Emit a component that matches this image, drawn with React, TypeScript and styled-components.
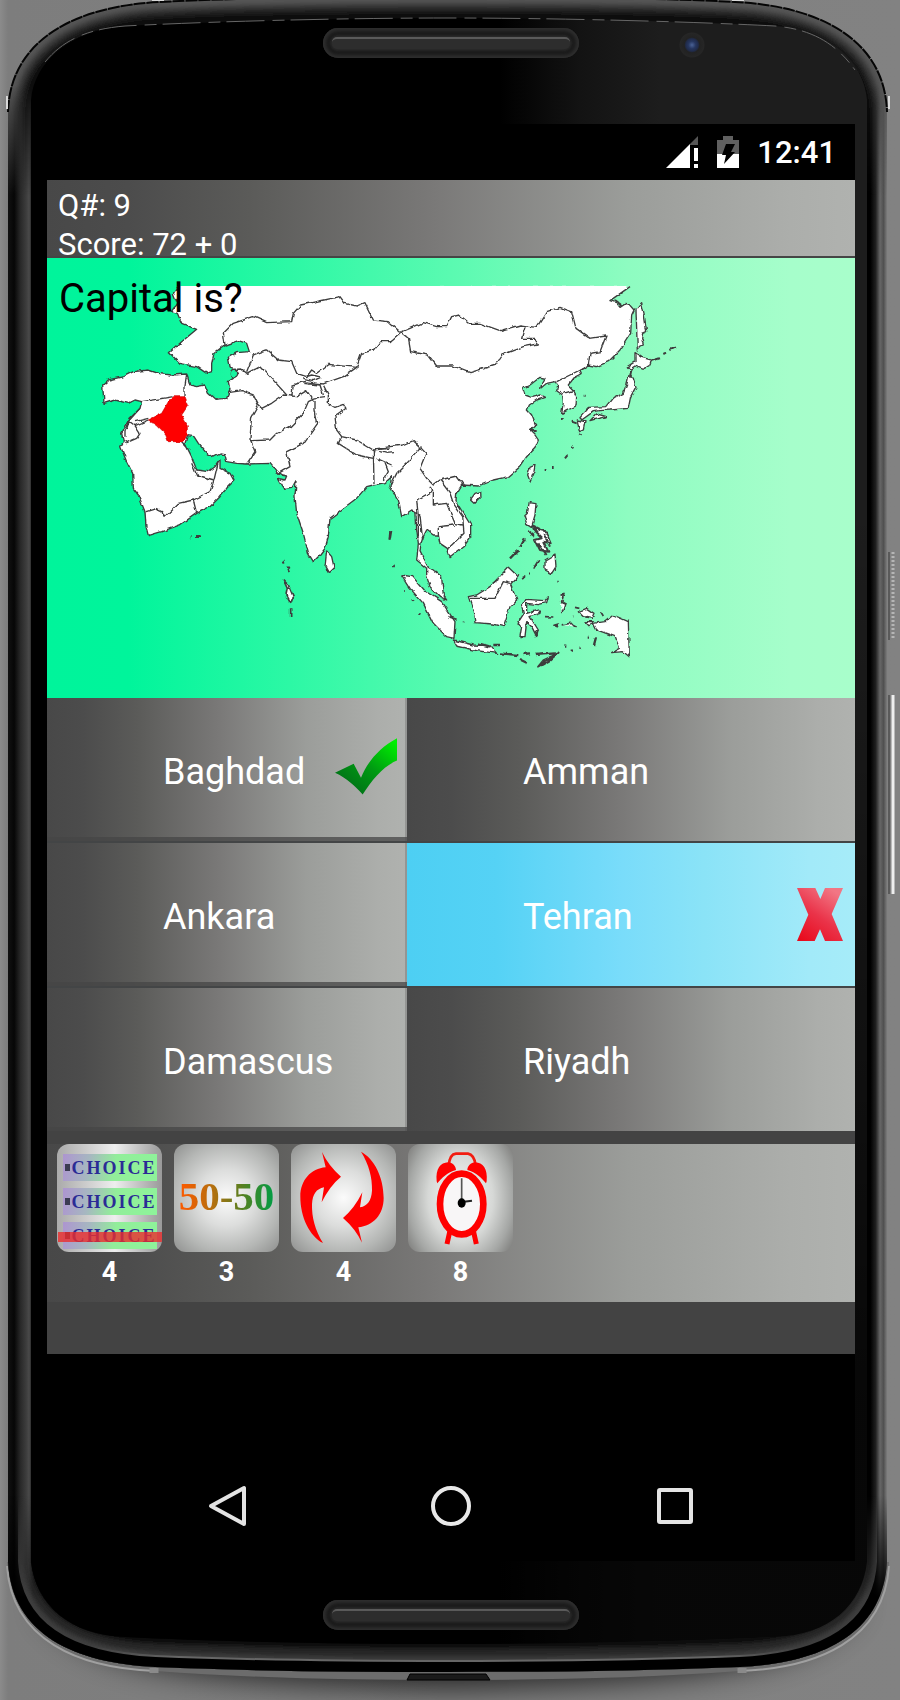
import React from "react";
import styled, { createGlobalStyle, css } from "styled-components";

const GlobalStyle = createGlobalStyle`
  * { box-sizing: border-box; }
  html, body { margin: 0; padding: 0; }
  body {
    background: #808080;
    font-family: Roboto, "Liberation Sans", sans-serif;
    color: #fff;
  }
  button { font: inherit; color: inherit; border: 0; padding: 0; background: none; cursor: pointer; }
  p, h1 { margin: 0; font-weight: 400; }
  svg { display: block; }
`;

const steel =
  "linear-gradient(90deg, #484848 0%, #4c4c4c 10%, #5b5b59 25%, #7a7978 48%, #9b9d9a 72%, #acaeab 92%, #b0b2af 100%)";
const mint =
  "linear-gradient(90deg, #00f49b 0%, #00f59b 10%, #2cf8a5 30%, #5afab1 50%, #8efcc1 72%, #a6fecb 92%, #a8fecb 100%)";
const sky =
  "linear-gradient(90deg, #4dcff3 0%, #55d2f5 20%, #79dcfa 48%, #8ae3f7 66%, #a2eaf9 90%, #a6ecf9 100%)";

const Device = styled.div`
  position: relative;
  min-height: 100vh;
  display: flex;
  flex-direction: column;
  padding: 0 5% 0 47px;
  overflow: hidden;
`;

const ShellDrawing = styled.svg`
  position: absolute;
  inset: 0;
  width: 100%;
  height: 100%;
`;

const Bezel = styled.div<{ $height: number; $top: number }>`
  position: relative;
  min-height: ${(p) => p.$height}px;
  padding-top: ${(p) => p.$top}px;
  display: grid;
  grid-template-columns: 1fr 256px 1fr;
  align-items: start;
`;

const Speaker = styled.div`
  grid-column: 2;
  height: 30px;
  border-radius: 15px;
  padding: 9px;
  background: #2b2b2b;
  box-shadow: inset 0 0 4px 3px #303030, inset 0 0 3px 7px #171717;
`;

const SpeakerSlot = styled.div`
  height: 12px;
  border-radius: 5px;
  border-top: 2px solid #5a5a5a;
  background: #2d2d2d;
`;

const Camera = styled.div`
  width: 26px;
  height: 26px;
  margin: 4px 0 0 100px;
  border-radius: 50%;
  background: radial-gradient(circle at 50% 50%, #4a6296 0, #26365f 20%, #202b4a 34%, #222 42%, #262626 65%, #1c1c1c 72%);
`;

const Screen = styled.main`
  position: relative;
  background: #000;
`;

const StatusBar = styled.div`
  height: 56px;
  padding: 0 19px 0 0;
  display: flex;
  justify-content: flex-end;
  align-items: center;
  gap: 18px;
`;

const Clock = styled.time`
  font-size: 31px;
  line-height: 36px;
  font-weight: 500;
  padding-top: 2px;
`;

const ScoreHeader = styled.header`
  min-height: 78px;
  padding: 6px 11px 0;
  border-bottom: 2px solid #454545;
  background: ${steel};
  font-size: 31px;
  line-height: 39px;
  p { height: 39px; }
  p + p { height: 31px; }
`;

const QuestionPanel = styled.section`
  position: relative;
  min-height: 440px;
  background: ${mint};
`;

const Question = styled.h1`
  position: absolute;
  top: 17px;
  left: 12px;
  color: #000;
  font-size: 40px;
  line-height: 48px;
`;

const AsiaMap = styled.svg`
  width: 100%;
  height: 440px;
`;

const AnswerGrid = styled.section`
  display: grid;
  grid-template-columns: 45fr 56fr;
  grid-auto-rows: minmax(143px, auto);
  row-gap: 2px;
  background: #434546;
`;

const Answer = styled.button<{ $picked?: boolean }>`
  display: flex;
  align-items: center;
  justify-content: space-between;
  padding: 0 12px 0 116px;
  font-size: 36px;
  line-height: 44px;
  text-align: left;
  background: ${(p) => (p.$picked ? sky : steel)};
  &:nth-child(odd) { padding-right: 10px; }
  ${(p) =>
    !p.$picked &&
    css`
      &:nth-child(odd) {
        box-shadow: inset 0 -4px rgba(70, 70, 70, 0.75), inset -2px 0 rgba(120, 120, 120, 0.5);
      }
    `}
`;

const City = styled.span`
  padding-top: 5px;
`;

const Separator = styled.div`
  height: 13px;
  background: #434343;
`;

const Lifelines = styled.section`
  display: flex;
  gap: 12px;
  min-height: 158px;
  padding: 0 10px 14px;
  background: ${steel};
`;

const Lifeline = styled.button`
  width: 105px;
  display: flex;
  flex-direction: column;
  align-items: center;
  gap: 4px;
`;

const Tile = styled.span<{ $fade?: boolean; $striped?: boolean }>`
  position: relative;
  width: 105px;
  height: 108px;
  border-radius: 12px;
  overflow: hidden;
  display: flex;
  flex-direction: column;
  align-items: center;
  justify-content: center;
  background: radial-gradient(circle, #fbfbfb 0%, #dcdddc 38%, #b4b6b4 72%, #8e8f8e 100%);
  ${(p) =>
    p.$fade &&
    css`
      background: radial-gradient(ellipse 62% 80% at 50% 50%, #fbfbfb 0%, #d6d8d6 50%, #a5a7a5 80%, #7d7d7b 100%);
    `}
  ${(p) =>
    p.$striped &&
    css`
      justify-content: flex-start;
      gap: 7px;
      padding-top: 10px;
      background: linear-gradient(90deg, #aaa 0%, #eee 55%, #999 100%);
    `}
`;

const Choice = styled.span`
  width: 94px;
  height: 27px;
  display: flex;
  align-items: center;
  justify-content: space-between;
  background: linear-gradient(100deg, #ad95d0 0%, #a6b8c0 28%, #92ee9a 55%, #8ef39a 100%);
  color: #2b2b96;
  font-family: "Liberation Serif", serif;
  font-weight: 700;
  font-size: 18px;
  line-height: 28px;
  letter-spacing: 2px;
  &::before {
    content: "";
    width: 5px;
    height: 7px;
    margin-left: 2px;
    background: #3b3b52;
  }
`;

const Strike = styled.span`
  position: absolute;
  left: 1px;
  right: 0;
  top: 88px;
  height: 10px;
  background: rgba(235, 45, 45, 0.8);
`;

const Fifty = styled.span`
  padding-bottom: 4px;
  font-family: "Liberation Serif", serif;
  font-weight: 700;
  font-size: 41px;
  line-height: 48px;
  color: transparent;
  background: linear-gradient(90deg, #f75c00 5%, #b3700f 36%, #587f20 66%, #059b42 98%);
  background-clip: text;
  -webkit-background-clip: text;
`;

const Count = styled.span`
  font-size: 27px;
  line-height: 32px;
  font-weight: 700;
`;

const AppFooter = styled.div`
  height: 52px;
  background: #434343;
`;

const NavBar = styled.nav`
  padding: 120px 0 23px;
  display: flex;
  justify-content: center;
  gap: 160px;
`;

const NavButton = styled.button`
  width: 64px;
  height: 64px;
  display: grid;
  place-items: center;
`;

const topArc = "M8 112 C10 40 75 6 160 2 C230 -2 350 -3 448 -3 C546 -3 665 -2 735 2 C820 6 885 40 887 112";
const topEdge = "M8 220 V112 C10 40 75 6 160 2 C230 -2 350 -3 448 -3 C546 -3 665 -2 735 2 C820 6 885 40 887 112 V220";
const bottomEdge =
  "M8 1440 V1562 C12 1635 75 1663 155 1667 C250 1671 350 1672 448 1672 C546 1672 645 1671 740 1667 C820 1663 883 1635 887 1562 V1440";
const bodyOutline = `${topArc} V1562 C883 1635 820 1663 740 1667 C645 1671 546 1672 448 1672 C350 1672 250 1671 155 1667 C75 1663 12 1635 8 1562 Z`;
const glassOutline =
  "M31 100 C34 62 70 30 125 26 C220 21 350 18 448 18 C546 18 680 21 775 26 C830 30 864 62 867 100 V1562 C862 1605 830 1635 775 1637 C680 1642 546 1644 448 1644 C350 1644 220 1642 125 1637 C70 1635 36 1605 31 1562 Z";

const Shell = () => (
  <ShellDrawing viewBox="0 0 900 1700" preserveAspectRatio="none" aria-hidden="true">
    <defs>
      <linearGradient id="sides" gradientUnits="userSpaceOnUse" x1="8" x2="888" y1="0" y2="0">
        <stop offset="0" stopColor="#111" />
        <stop offset="0.007" stopColor="#060606" />
        <stop offset="0.014" stopColor="#282828" />
        <stop offset="0.021" stopColor="#3e3e3e" />
        <stop offset="0.024" stopColor="#4a4a4a" />
        <stop offset="0.027" stopColor="#222" />
        <stop offset="0.03" stopColor="#000" />
        <stop offset="0.98" stopColor="#000" />
        <stop offset="0.986" stopColor="#202020" />
        <stop offset="0.991" stopColor="#666" />
        <stop offset="0.995" stopColor="#505050" />
        <stop offset="1" stopColor="#8a8a8a" />
      </linearGradient>
      <linearGradient id="glass" gradientUnits="userSpaceOnUse" x1="500" x2="660" y1="0" y2="0">
        <stop offset="0" stopColor="#000" />
        <stop offset="0.5" stopColor="#131313" />
        <stop offset="1" stopColor="#1d1d1d" />
      </linearGradient>
      <linearGradient id="glassFade" x1="0" x2="0" y1="0" y2="1">
        <stop offset="0.3" stopColor="#000" stopOpacity="0" />
        <stop offset="0.85" stopColor="#000" stopOpacity="0.75" />
      </linearGradient>
      <linearGradient id="backdrop" x1="0" x2="1" y1="0" y2="0">
        <stop offset="0" stopColor="#8b8b8b" />
        <stop offset="0.009" stopColor="#7d7d7d" />
        <stop offset="0.5" stopColor="#808080" />
        <stop offset="1" stopColor="#828282" />
      </linearGradient>
      <linearGradient id="rimLine" gradientUnits="userSpaceOnUse" x1="90" x2="800" y1="0" y2="0">
        <stop offset="0" stopColor="#666" stopOpacity="0" />
        <stop offset="0.12" stopColor="#666" />
        <stop offset="0.88" stopColor="#666" />
        <stop offset="1" stopColor="#666" stopOpacity="0" />
      </linearGradient>
      <linearGradient id="endsFade" gradientUnits="userSpaceOnUse" x1="0" x2="0" y1="0" y2="1700">
        <stop offset="0.05" stopColor="#fff" />
        <stop offset="0.115" stopColor="#000" />
        <stop offset="0.88" stopColor="#000" />
        <stop offset="0.94" stopColor="#fff" />
      </linearGradient>
      <mask id="endsMask" maskUnits="userSpaceOnUse" x="0" y="0" width="900" height="1700">
        <rect width="900" height="1700" fill="url(#endsFade)" />
      </mask>
      <clipPath id="bodyClip"><path d={bodyOutline} /></clipPath>
      <filter id="soft" x="-10%" y="-50%" width="120%" height="200%">
        <feGaussianBlur stdDeviation="16" />
      </filter>
      <filter id="bevel" filterUnits="userSpaceOnUse" x="0" y="-20" width="900" height="1720">
        <feGaussianBlur stdDeviation="2" />
      </filter>
    </defs>
    <rect width="900" height="1700" fill="url(#backdrop)" />
    <path d="M40 1600 C80 1660 150 1680 448 1688 C746 1680 816 1660 860 1600 Z" fill="#000" filter="url(#soft)" opacity="0.75" />
    <path d="M7 1562 C12 1640 78 1668 155 1671 C250 1678 350 1680 448 1680 C546 1680 645 1678 740 1671 C818 1668 884 1640 889 1562 Z" fill="#6c6c6c" />
    <path d="M7 1566 C12 1640 78 1668 155 1671 M889 1566 C884 1640 818 1668 740 1671" fill="none" stroke="#a0a0a0" strokeWidth="2" />
    <path d="M407 1680 L410 1674 H486 L490 1680 Z" fill="#1a1a1a" stroke="#000" strokeWidth="1" />
    <path d="M154 1668 V1673 M742 1668 V1673" stroke="#8a8a8a" strokeWidth="9" />
    <path d={bodyOutline} fill="url(#sides)" />
    <g mask="url(#endsMask)">
      <g clipPath="url(#bodyClip)" fill="none">
        <g filter="url(#bevel)">
          <path d={topEdge} stroke="#0a0a0a" strokeWidth="50" />
          <path d={topEdge} stroke="#1f1f1f" strokeWidth="32" />
          <path d={topEdge} stroke="#383838" strokeWidth="22" />
          <path d={topEdge} stroke="#555" strokeWidth="12" />
          <path d={bottomEdge} stroke="#0c0c0c" strokeWidth="70" />
          <path d={bottomEdge} stroke="#272727" strokeWidth="46" />
          <path d={bottomEdge} stroke="#3e3e3e" strokeWidth="30" />
        </g>
        <path d={bottomEdge} stroke="url(#rimLine)" strokeWidth="24" />
        <path d={bottomEdge} stroke="#000" strokeWidth="20" />
      </g>
    </g>
    <path d={topArc} fill="none" stroke="#050505" strokeWidth="2" strokeDasharray="12 1" />
    <path d="M7 96 V109 M889 96 V109 M152 0 H164 M732 0 H744" stroke="#d8d8d8" strokeWidth="2" />
    <path d={glassOutline} fill="url(#glass)" />
    <path d={glassOutline} fill="url(#glassFade)" />
    <path
      d="M45 62 C65 38 90 29 125 26 C220 21 350 18 448 18 C546 18 680 21 775 26 C810 29 835 42 855 70"
      fill="none"
      stroke="#666"
      strokeWidth="1"
      strokeDasharray="38 8 12 6"
    />
    <path d="M893 552 V640" stroke="#b5b5b5" strokeWidth="3" strokeDasharray="2 2" />
    <path d="M889 552 V640 M889 695 V894" stroke="#5a5a5a" strokeWidth="2" />
    <path d="M893 695 V894" stroke="#eee" strokeWidth="3" />
  </ShellDrawing>
);

/* Land drawn at three units per pixel. */
const Asia = () => (
  <AsiaMap viewBox="0 0 808 440" preserveAspectRatio="xMinYMin meet" role="img" aria-label="Map of Asia">
    <defs>
      <filter id="coast" x="-5%" y="-5%" width="110%" height="110%">
        <feTurbulence type="fractalNoise" baseFrequency="0.14" numOctaves="2" seed="4" />
        <feDisplacementMap in="SourceGraphic" scale="4" xChannelSelector="R" yChannelSelector="G" />
      </filter>
    </defs>
    <path d="M130 28 H580 L562 42 V50 H132 Z" fill="#fff" />
    <g filter="url(#coast)">
      <g transform="translate(43 12) scale(0.33333)" fill="#fff" stroke="#3c3c3c" strokeWidth="4" strokeLinejoin="round">
        <path
          d="M1620 50 L1560 92 1578 98 1590 112 1608 100 1618 104 1632 120 1625 135 1622 190 1590 240 1555 275 1520 290 1495 285 1470 300 1475 312 1450 325 1435 345 1450 360 1460 380 1458 408 1430 422 1415 430 1420 400 1418 375 1400 362 1403 345 1395 335 1370 340 1352 355 1355 342 1365 325 1350 322 1320 345 1298 355 1305 375 1325 382 1350 375 1364 382 1340 390 1318 405 1312 420 1325 435 1337 465 1320 480 1335 495 1345 510 1335 535 1310 560 1290 590 1255 620 1210 630 1165 648 1115 645 1100 670 1098 695 1120 730 1142 765 1142 800 1125 825 1080 860 1072 835 1050 820 1045 795 1030 795 1010 780 1000 800 993 820 990 845 1000 865 1015 892 1030 900 1055 920 1060 975 1070 990 1050 980 1020 950 1010 920 1010 895 980 870 985 820 980 780 978 730 965 720 935 740 925 690 900 650 905 620 885 638 850 645 830 650 800 685 760 715 720 745 715 800 705 835 690 855 670 875 655 850 640 790 620 730 615 680 618 632 605 655 585 658 570 635 565 625 585 630 590 618 575 615 560 605 540 580 470 582 440 580 410 575 405 555 390 552 370 562 350 550 325 520 312 500 292 497 285 520 305 560 320 600 355 605 375 590 390 570 390 595 420 610 432 632 410 655 390 680 360 710 320 730 270 765 215 785 175 797 168 770 165 725 145 675 130 655 128 610 110 575 92 530 100 515 95 490 110 460 150 415 155 395 135 390 115 400 75 390 42 400 38 345 55 330 100 320 130 305 175 300 205 310 245 315 290 312 300 345 320 350 345 345 355 370 375 388 410 385 420 360 415 335 430 325 445 310 430 300 420 290 415 262 440 248 478 245 470 220 445 212 400 228 372 250 365 280 365 305 350 310 320 290 270 280 238 248 275 215 320 178 275 160 262 130 245 125 262 100 250 70 262 52"
        />
        <g fill="none">
          <path d="M290 312 285 345 285 380 M155 395 200 388 250 380 M175 450 135 467 120 455 112 480 M175 445 135 455 M135 467 150 490 140 505 110 518 100 512 M150 415 120 445 105 485 105 500" />
          <path d="M168 725 200 715 215 722 222 742 265 700 310 690 360 665 372 630 320 615 305 580 M310 690 320 730 M372 630 385 575 M275 515 290 530" />
          <path d="M415 368 455 362 490 375 505 405 485 440 480 505 495 545 470 582 M480 512 540 510 560 490 600 470 640 430 655 395 675 385 M505 405 515 415 545 400 580 375 620 380 650 362 665 385 705 380" />
          <path d="M430 298 455 297 470 310 510 288 545 325 590 375 M470 305 490 255 530 240 565 270 605 275 620 310 650 320 665 300 680 310 715 283 750 287 800 292 760 320 700 342 640 335 610 345 605 380 M650 320 665 315 692 322 670 332 640 325 M640 340 690 345 700 375" />
          <path d="M800 292 815 250 850 240 870 215 900 215 932 187 M405 225 400 190 430 160 490 140 530 158 605 155 610 130 632 105 750 80 765 100 800 108 825 98 850 150 895 155 932 187" />
          <path d="M932 187 1000 158 1040 170 1070 170 1085 140 1105 135 1135 160 1170 160 1230 182 1290 165 1340 172 1370 125 1410 112 1445 125 1458 175 1500 205 1548 198 1530 245 1500 250 1495 285 M1305 172 1295 205 1335 205 1342 222 1300 230 1235 255 1215 285 1140 308 1090 288 1040 288 1015 255 962 245 955 205 932 187" />
          <path d="M1490 290 1440 315 1400 335 M1420 370 1455 360 M675 390 675 420 683 460 640 520 590 545 600 590 565 610 M700 345 715 375 715 400 735 412 760 403 768 415 735 440 740 480 755 500 800 510 850 540 900 535 M755 500 745 520 800 555 850 565 855 540 M850 540 852 640 M860 565 905 585 M870 545 890 550 912 548 M885 580 895 605 880 630 M870 535 900 530 940 525 970 512 990 530" />
          <path d="M995 530 960 570 920 610 905 640 M980 520 1008 550 990 595 1010 625 1030 645 1050 630 1100 618 1120 645 M1020 650 1025 665 980 690 985 740 985 800 M1030 665 1030 705 1070 700 1080 725 1095 760 1118 765 M1050 630 1080 670 1090 700 1118 740 1122 790 1075 835 M1045 795 1045 770 1095 765 M965 720 990 735 998 810" />
        </g>
        <path d="M175 450 215 430 235 395 255 380 285 380 295 405 275 435 292 465 292 495 275 515 235 515 225 490 200 465Z" fill="#f00" stroke="#c00" strokeWidth="2" />
        <ellipse cx="432" cy="310" rx="11" ry="12" fill="#18f5a0" />
        <path d="M302 802 h3 M318 798 h14 M578 875 l3 6 M592 890 l4 6" strokeWidth="6" />

        <g transform="translate(870 0)">
          <path d="M772 240 768 120 785 98 792 130 800 185 788 190 785 205 790 225 775 232Z M765 248 785 262 815 270 810 285 790 298 765 288 750 298 742 290 765 275Z" />
          <path d="M748 310 760 325 768 350 752 380 745 415 690 420 660 422 640 425 605 450 600 440 625 412 680 410 700 385 730 370 740 345Z M630 452 650 432 680 440 655 445Z M592 450 615 455 610 480 598 485Z" />
          <path d="M465 585 462 605 450 634 443 615 450 592Z M272 688 285 670 302 665 303 682 285 700Z M448 695 468 698 465 735 455 770 440 760 432 740 442 730Z" />
          <path d="M815 272 840 265 M850 252 858 248 M868 240 885 232 M705 90 725 105 M755 295 750 320 M575 455 590 460 M540 447 h8 M611 377 h3 M600 492 604 496 M576 535 580 531 M555 565 562 556 M494 597 h8 M516 591 h5 M29 812 34 782 M40 888 h3 M450 480 467 480" strokeWidth="6" />
        </g>
        <g transform="translate(510 630)">
          <path d="M425 285 455 290 490 330 545 365 585 425 582 475 560 470 520 430 490 370 450 325Z M580 480 640 495 690 497 710 520 650 512 590 498Z M200 213 215 230 222 262 205 278 195 260Z" />
          <path d="M625 350 650 345 690 320 745 262 775 290 752 315 770 360 750 380 730 440 700 432 645 428 640 395Z" />
          <path d="M630 355 705 355 730 305 750 310 M695 312 720 295" fill="none" />
          <path d="M790 400 785 380 798 358 855 362 865 350 860 368 835 374 800 370 800 400 835 390 840 400 810 410 835 450 830 470 815 440 800 425 795 470 780 470 785 440 774 425Z M855 240 885 222 888 260 875 280 855 270Z" />
          <path d="M1000 430 1035 425 1060 405 1105 425 1108 530 1090 515 1055 518 1078 505 1065 470 1010 450Z M955 395 980 385 1002 400 995 415 970 410Z M975 425 1000 425 990 440Z" />
          <path d="M820 145 860 155 875 190 850 185 865 215 840 210 825 180 845 175 830 160Z M835 190 860 225 M815 135 845 150 M805 155 825 170 M850 160 870 200" strokeWidth="6" />
          <path d="M750 235 775 210 M782 200 795 175 M820 265 835 240 M805 280 h5 M788 292 h5 M830 450 v18 M838 395 h5" strokeWidth="7" />
          <path d="M70 300 82 325 78 345 92 370 100 350 85 315Z M70 245 h4 M84 270 l4 6 M92 385 v26 M390 150 388 182 M402 258 v4 M432 333 h6 M455 358 460 362 M475 400 480 405 M560 385 h5 M565 410 590 418 M608 427 h5" strokeWidth="5" />
          <path d="M700 495 720 495 M720 520 775 525 M790 522 810 520 M825 525 885 520 M780 540 800 550 M835 560 850 542 875 530 895 518 870 540Z M655 490 690 500 M915 500 h4 M935 512 h4 M958 508 964 502 M1002 495 1008 472 M983 470 h4" strokeWidth="7" />
          <path d="M902 350 912 340 905 365 915 370 905 400 M855 410 880 411 M882 436 895 432 892 440Z M905 435 930 430 950 440 M938 410 h4 M945 382 958 385 M1022 395 1030 408 M889 305 h4" strokeWidth="5" />
        </g>
      </g>
    </g>
  </AsiaMap>
);

const CheckMark = () => (
  <svg width="62" height="63" viewBox="0 0 186 188" role="img" aria-label="Correct">
    <defs>
      <linearGradient id="leaf" x1="0.2" y1="1" x2="1" y2="0.1">
        <stop offset="0" stopColor="#006a18" />
        <stop offset="0.5" stopColor="#009a12" />
        <stop offset="1" stopColor="#00f000" />
      </linearGradient>
    </defs>
    <path d="M0 104 L56 77 L78 119 C96 74 130 30 186 0 V67 C145 84 112 124 83 169 C60 144 35 120 0 104Z" fill="url(#leaf)" />
  </svg>
);

const CrossMark = () => (
  <svg width="46" height="53" viewBox="0 0 138 159" role="img" aria-label="Wrong">
    <defs>
      <linearGradient id="ruby" x1="0.1" y1="1" x2="0.7" y2="0">
        <stop offset="0" stopColor="#e80a1c" />
        <stop offset="0.5" stopColor="#ea3349" />
        <stop offset="1" stopColor="#f27684" />
      </linearGradient>
    </defs>
    <path d="M0 0 H55 L70 33 L84 0 H138 L104 78 L138 159 H84 L69 124 L53 159 H0 L34 80Z" fill="url(#ruby)" />
  </svg>
);

const SwapIcon = () => {
  const arrow =
    "M93 24 L104 70 C60 74 28 108 28 158 C28 220 56 276 96 297 C72 258 62 220 63 180 C65 150 76 135 99 130 L92 175 Q116 126 150 98 Q113 66 93 24Z";
  return (
    <svg width="105" height="108" viewBox="0 0 315 324" fill="#f00" aria-hidden="true">
      <path d={arrow} />
      <path d={arrow} transform="rotate(180 153 160)" />
    </svg>
  );
};

const AlarmIcon = () => (
  <svg width="105" height="108" viewBox="0 0 315 324" aria-hidden="true">
    <path d="M122 66 C124 38 132 30 144 29 H180 C192 31 200 42 203 64" fill="none" stroke="#f21c10" strokeWidth="8" />
    <path d="M86 112 C82 74 98 56 120 55 C134 55 144 68 144 78 C118 84 102 102 88 118Z M236 112 C240 74 224 56 202 55 C188 55 178 68 178 78 C204 84 220 102 234 118Z" fill="#f00" />
    <path d="M125 264 L117 300 M197 264 L205 300" stroke="#f00" strokeWidth="15" />
    <ellipse cx="161" cy="180" rx="65" ry="91" fill="#f8f6f7" stroke="#f00" strokeWidth="20" />
    <path d="M161 176 V103" stroke="#555" strokeWidth="5" />
    <path d="M161 174 L192 170" stroke="#222" strokeWidth="6" />
    <ellipse cx="161" cy="177" rx="12" ry="14" />
  </svg>
);

const SignalIcon = () => (
  <svg width="33" height="32" viewBox="0 0 33 32" aria-label="Signal">
    <path d="M24 8 L32 0 V9 H24Z" fill="#555" />
    <path d="M0 32 L24 8 V32Z M28 12 H32 V25 H28Z M28 28 H32 V32 H28Z" fill="#fff" />
  </svg>
);

const BatteryIcon = () => (
  <svg width="22" height="32" viewBox="0 0 22 32" aria-label="Battery charging">
    <path d="M0 4 H6 V0 H16 V4 H22 V18 H0Z" fill="#606060" />
    <path d="M0 18 H22 V32 H0Z" fill="#fff" />
    <path d="M9 8 H18 L14 16 H18 L7 28 L9 19 H5Z" fill="#000" />
  </svg>
);

type AnswerItem = { city: string; mark?: "right" | "wrong" };
const answers: AnswerItem[] = [
  { city: "Baghdad", mark: "right" },
  { city: "Amman" },
  { city: "Ankara" },
  { city: "Tehran", mark: "wrong" },
  { city: "Damascus" },
  { city: "Riyadh" },
];

export default function App() {
  return (
    <>
      <GlobalStyle />
      <Device>
        <Shell />
        <Bezel $height={124} $top={28}>
          <Speaker><SpeakerSlot /></Speaker>
          <Camera />
        </Bezel>
        <Screen>
          <StatusBar>
            <SignalIcon />
            <BatteryIcon />
            <Clock>12:41</Clock>
          </StatusBar>
          <ScoreHeader>
            <p>Q#: 9</p>
            <p>Score: 72 + 0</p>
          </ScoreHeader>
          <QuestionPanel>
            <Asia />
            <Question>Capital is?</Question>
          </QuestionPanel>
          <AnswerGrid>
            {answers.map(({ city, mark }) => (
              <Answer key={city} type="button" $picked={mark === "wrong"}>
                <City>{city}</City>
                {mark === "right" && <CheckMark />}
                {mark === "wrong" && <CrossMark />}
              </Answer>
            ))}
          </AnswerGrid>
          <Separator />
          <Lifelines>
            <Lifeline type="button">
              <Tile $striped>
                <Choice>CHOICE</Choice>
                <Choice>CHOICE</Choice>
                <Choice>CHOICE</Choice>
                <Strike />
              </Tile>
              <Count>4</Count>
            </Lifeline>
            <Lifeline type="button">
              <Tile><Fifty>50-50</Fifty></Tile>
              <Count>3</Count>
            </Lifeline>
            <Lifeline type="button" aria-label="Swap question, 4 left">
              <Tile><SwapIcon /></Tile>
              <Count>4</Count>
            </Lifeline>
            <Lifeline type="button" aria-label="Extra time, 8 left">
              <Tile $fade><AlarmIcon /></Tile>
              <Count>8</Count>
            </Lifeline>
          </Lifelines>
          <AppFooter />
          <NavBar>
            <NavButton type="button" aria-label="Back">
              <svg width="40" height="44" viewBox="0 0 40 44" fill="none" stroke="#e4e4e4" strokeWidth="4">
                <path d="M4 22 L37 4 V40Z" strokeLinejoin="round" />
              </svg>
            </NavButton>
            <NavButton type="button" aria-label="Home">
              <svg width="40" height="40" viewBox="0 0 40 40" fill="none" stroke="#e8e8e8" strokeWidth="4">
                <circle cx="20" cy="20" r="18" />
              </svg>
            </NavButton>
            <NavButton type="button" aria-label="Recent apps">
              <svg width="36" height="36" viewBox="0 0 36 36" fill="none" stroke="#e4e4e4" strokeWidth="4">
                <rect x="2" y="2" width="32" height="32" rx="1" />
              </svg>
            </NavButton>
          </NavBar>
        </Screen>
        <Bezel $height={100} $top={39}>
          <Speaker><SpeakerSlot /></Speaker>
        </Bezel>
      </Device>
    </>
  );
}
